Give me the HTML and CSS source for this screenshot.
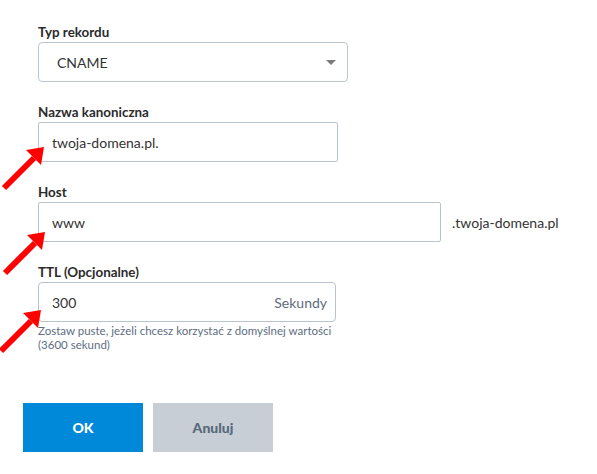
FILE: index.html
```html
<!DOCTYPE html>
<html lang="pl">
<head>
<meta charset="utf-8">
<title>Rekord DNS</title>
<link rel="stylesheet" href="styles.css">
</head>
<body>
<div class="dialog">
  <form class="fields">
    <div class="field">
      <label class="label">Typ rekordu</label>
      <div class="select">
        <span class="select-value">CNAME</span>
        <span class="caret"></span>
      </div>
    </div>
    <div class="field">
      <label class="label">Nazwa kanoniczna</label>
      <input class="input input-canon" type="text" value="twoja-domena.pl.">
    </div>
    <div class="field">
      <label class="label">Host</label>
      <div class="host-row">
        <input class="input input-host" type="text" value="www">
        <span class="suffix">.twoja-domena.pl</span>
      </div>
    </div>
    <div class="field field-ttl">
      <label class="label">TTL (Opcjonalne)</label>
      <div class="input-group">
        <input class="input input-bare" type="text" value="300">
        <span class="unit">Sekundy</span>
      </div>
      <p class="hint">Zostaw puste, jeżeli chcesz korzystać z domyślnej wartości<br>(3600 sekund)</p>
    </div>
  </form>
  <div class="actions">
    <button class="btn btn-ok" type="button">OK</button>
    <button class="btn btn-cancel" type="button">Anuluj</button>
  </div>

  <svg class="arrow arrow-1" width="50" height="50" viewBox="0 0 50 50">
    <line x1="4" y1="45" x2="34" y2="15" stroke="#ff0000" stroke-width="6"/>
    <polygon points="44,4 26,7 41,22" fill="#ff0000"/>
  </svg>
  <svg class="arrow arrow-2" width="50" height="50" viewBox="0 0 50 50">
    <line x1="4" y1="45" x2="34" y2="15" stroke="#ff0000" stroke-width="6"/>
    <polygon points="44,4 26,7 41,22" fill="#ff0000"/>
  </svg>
  <svg class="arrow arrow-3" width="50" height="50" viewBox="0 0 50 50">
    <line x1="4" y1="45" x2="34" y2="15" stroke="#ff0000" stroke-width="6"/>
    <polygon points="44,4 26,7 41,22" fill="#ff0000"/>
  </svg>
</div>
</body>
</html>
```

FILE: styles.css
```css
* { box-sizing: border-box; }

html, body {
  margin: 0;
  padding: 0;
  background: #ffffff;
}

body {
  font-family: Lato, "Open Sans", "Liberation Sans", sans-serif;
  color: #2f2f2f;
  width: 597px;
  height: 474px;
  overflow: hidden;
}

.dialog {
  position: relative;
  padding: 22px 0 0 23px;
}

.fields {
  margin: 0;
  padding-left: 15px;
  display: flex;
  flex-direction: column;
  gap: 20px;
}

.field {
  display: flex;
  flex-direction: column;
}

.label {
  display: block;
  font-size: 13.4px;
  font-weight: 700;
  line-height: 20px;
  color: #2b2b2b;
}

.select {
  width: 310px;
  height: 40px;
  border: 1px solid #bcc6d1;
  border-radius: 4px;
  display: flex;
  align-items: center;
  justify-content: space-between;
  padding: 0 11px 0 18px;
}

.select-value {
  font-size: 14px;
  color: #333333;
}

.caret {
  width: 0;
  height: 0;
  border-left: 5px solid transparent;
  border-right: 5px solid transparent;
  border-top: 5px solid #7b7b7b;
}

.input {
  height: 40px;
  border: 1px solid #b9c3cf;
  border-radius: 2px;
  padding: 0 13px;
  font-family: Lato, "Open Sans", "Liberation Sans", sans-serif;
  font-size: 14px;
  color: #333333;
  background: #ffffff;
  outline: none;
}

.input-canon { width: 300px; }

.host-row {
  display: flex;
  align-items: center;
}

.input-host { width: 403px; }

.suffix {
  margin-left: 11px;
  font-size: 14px;
  color: #333333;
}

.input-group {
  width: 298px;
  height: 40px;
  border: 1px solid #b9c3cf;
  border-radius: 4px;
  display: flex;
  align-items: center;
}

.input-bare {
  border: none;
  height: 38px;
  flex: 1;
  min-width: 0;
  background: transparent;
}

.unit {
  font-size: 14px;
  color: #5d6c7e;
  padding-right: 8px;
}

.hint {
  margin: 2px 0 0;
  font-size: 11.5px;
  line-height: 14px;
  color: #5d6d82;
}

.actions {
  display: flex;
  gap: 10px;
  margin-top: 51px;
}

.btn {
  width: 120px;
  height: 49px;
  border: none;
  border-radius: 0;
  font-family: Lato, "Open Sans", "Liberation Sans", sans-serif;
  font-size: 14px;
  font-weight: 900;
  cursor: pointer;
}

.btn-ok {
  background: #0088d9;
  color: #ffffff;
}

.btn-cancel {
  background: #c8ced5;
  color: #56687a;
}

.arrow {
  position: absolute;
  left: 0;
}

.arrow-1 { top: 143px; left: 0; }
.arrow-2 { top: 228px; left: 1px; }
.arrow-3 { top: 306px; left: -3px; }
```
